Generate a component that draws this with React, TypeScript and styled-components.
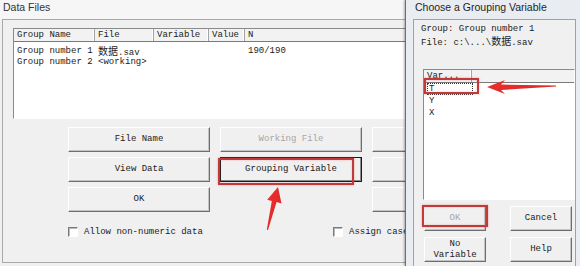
import React from "react";
import styled, { createGlobalStyle } from "styled-components";

const MONO = `"Liberation Mono", "Noto Sans CJK SC", monospace`;
const UI = `"Liberation Sans", "Noto Sans", sans-serif`;

const GlobalStyle = createGlobalStyle`
  html, body {
    margin: 0;
    padding: 0;
    background: #f0f0f0;
  }
`;

const groupColumns = [
  { label: "Group Name", width: 81 },
  { label: "File", width: 59 },
  { label: "Variable", width: 55 },
  { label: "Value", width: 36 },
  { label: "N", width: 200 },
];

const groupRows = [
  ["Group number 1", "数据.sav", "", "", "190/190"],
  ["Group number 2", "<working>", "", "", ""],
];

function App() {
  return (
    <Screen>
      <GlobalStyle />
      <DataWindow>
        <TitleBar>Data Files</TitleBar>
        <Frame>
          <ListBox>
            <HeaderRow>
              {groupColumns.map((c) => (
                <HeadCell key={c.label} $width={c.width}>
                  {c.label}
                </HeadCell>
              ))}
            </HeaderRow>
            <Rows>
              {groupRows.map((row, i) => (
                <Row key={i}>
                  {row.map((value, j) => (
                    <Cell key={j} $width={groupColumns[j].width}>
                      {value.startsWith("数据") ? (
                        <>
                          <Cjk>数据</Cjk>.sav
                        </>
                      ) : (
                        value
                      )}
                    </Cell>
                  ))}
                </Row>
              ))}
            </Rows>
          </ListBox>

          <ButtonGrid>
            <Button>File Name</Button>
            <Button disabled>Working File</Button>
            <Button />
            <Button>View Data</Button>
            <ButtonSlot>
              <Button $default>Grouping Variable</Button>
              <Highlight $left={-2} $top={1} $width={136} $height={27} />
            </ButtonSlot>
            <Button />
            <Button>OK</Button>
            <Spacer />
            <Button />
          </ButtonGrid>

          <CheckRow>
            <CheckOption $width={265}>
              <CheckBox />
              Allow non-numeric data
            </CheckOption>
            <CheckOption $width={200}>
              <CheckBox />
              Assign cases
            </CheckOption>
          </CheckRow>
        </Frame>
      </DataWindow>

      <Dialog>
        <DialogTitle>Choose a Grouping Variable</DialogTitle>
        <Client>
          <InfoLine>Group: Group number 1</InfoLine>
          <InfoLine>
            File: c:\...\<Cjk>数据</Cjk>.sav
          </InfoLine>
          <VarList>
            <HeaderRow>
              <HeadCell $width={48}>Var...</HeadCell>
            </HeaderRow>
            <VarItem $focused>T</VarItem>
            <VarItem>Y</VarItem>
            <VarItem>X</VarItem>
            <Highlight $left={0} $top={8} $width={55} $height={16} />
          </VarList>
          <DialogButtons>
            <ButtonSlot>
              <Button disabled>OK</Button>
              <Highlight $left={-2} $top={-1} $width={66} $height={22} />
            </ButtonSlot>
            <Button>Cancel</Button>
            <Button>
              No
              <br />
              Variable
            </Button>
            <Button>Help</Button>
          </DialogButtons>
        </Client>
      </Dialog>

      <Annotations viewBox="0 0 580 266">
        <defs>
          <linearGradient id="arrowRed" x1="0" y1="0" x2="1" y2="1">
            <stop offset="0" stopColor="#f0312a" />
            <stop offset="1" stopColor="#d4262a" />
          </linearGradient>
        </defs>
        <polygon
          points="278,187 281.5,203.5 276.6,202.1 268,230 266.8,229.8 271.8,200.9 267.2,199.8"
          fill="url(#arrowRed)"
        />
        <polygon
          points="487,87 505,80 501,84.5 556,85.6 556,86.6 501,90 505,94"
          fill="url(#arrowRed)"
        />
      </Annotations>
    </Screen>
  );
}

const Screen = styled.div`
  position: relative;
  display: flex;
  width: 580px;
  height: 266px;
  overflow: hidden;
  background: #f0f0f0;
  font-family: ${MONO};
  font-size: 9px;
  color: #1b1b1b;
`;

const DataWindow = styled.div`
  flex: none;
  width: 405px;
  display: flex;
  flex-direction: column;
  overflow: hidden;
  background: #f0f0f0;
`;

const TitleBar = styled.div`
  flex: none;
  height: 19px;
  padding: 1px 0 0 3px;
  box-sizing: border-box;
  font-family: ${UI};
  font-size: 10.5px;
  line-height: 13px;
  color: #333333;
  background: #f6f6f6;
`;

const Frame = styled.div`
  flex: 1;
  width: 560px;
  box-sizing: border-box;
  margin: 0 0 3px 2px;
  padding: 8px 0 0 10px;
  border: 1px solid #a9a9a9;
  border-right: none;
`;

const ListBox = styled.div`
  width: 520px;
  height: 91px;
  box-sizing: border-box;
  border: 1px solid;
  border-color: #8a8a8a #ffffff #ffffff #8a8a8a;
  background: #ffffff;
`;

const HeaderRow = styled.div`
  display: flex;
  height: 13px;
  box-sizing: border-box;
  border-bottom: 1px solid #7a7a7a;
  background: #f2f2f2;
`;

const HeadCell = styled.div<{ $width: number }>`
  flex: none;
  width: ${(p) => p.$width}px;
  box-sizing: border-box;
  padding-left: 3px;
  border-right: 1px solid #a3a3a3;
  box-shadow: inset -1px 0 0 #ffffff;
  line-height: 12px;
  white-space: nowrap;
  overflow: hidden;
`;

const Rows = styled.div`
  padding-top: 4px;
`;

const Row = styled.div`
  display: flex;
  height: 11px;
  line-height: 11px;
`;

const Cell = styled.div<{ $width: number }>`
  flex: none;
  width: ${(p) => p.$width}px;
  box-sizing: border-box;
  padding-left: 3px;
  white-space: nowrap;
`;

const Cjk = styled.span`
  font-family: "Noto Sans CJK SC", sans-serif;
  font-size: 10px;
  line-height: 10px;
`;

const ButtonGrid = styled.div`
  display: grid;
  grid-template-columns: repeat(3, 142px);
  grid-auto-rows: 25px;
  gap: 5px 10px;
  margin: 8px 0 0 55px;
`;

const ButtonSlot = styled.div`
  position: relative;
  display: flex;
`;

const Spacer = styled.div``;

const Button = styled.button<{ $default?: boolean }>`
  width: 100%;
  height: 100%;
  box-sizing: border-box;
  margin: 0;
  padding: 0;
  font-family: ${MONO};
  font-size: 9px;
  line-height: 11px;
  color: #1b1b1b;
  background: #f0f0f0;
  border: 1px solid;
  border-color: ${(p) =>
    p.$default ? "#1a1a1a" : "#ffffff #6e6e6e #6e6e6e #ffffff"};
  box-shadow: ${(p) =>
    p.$default ? "inset -1px -1px 0 #8a8a8a" : "inset -1px -1px 0 #c4c4c4"};

  &:disabled {
    color: #a6a6a6;
  }
`;

const Highlight = styled.div<{
  $left: number;
  $top: number;
  $width: number;
  $height: number;
}>`
  position: absolute;
  left: ${(p) => p.$left}px;
  top: ${(p) => p.$top}px;
  width: ${(p) => p.$width}px;
  height: ${(p) => p.$height}px;
  box-sizing: border-box;
  border: 2px solid #c03a3a;
  box-shadow: 0 0 2px rgba(230, 90, 90, 0.55),
    inset 0 0 2px rgba(230, 90, 90, 0.45);
  pointer-events: none;
`;

const CheckRow = styled.div`
  display: flex;
  margin: 14px 0 0 55px;
`;

const CheckOption = styled.label<{ $width: number }>`
  flex: none;
  width: ${(p) => p.$width}px;
  display: flex;
  align-items: center;
  gap: 6px;
  height: 11px;
  white-space: nowrap;
`;

const CheckBox = styled.span`
  flex: none;
  width: 10px;
  height: 10px;
  box-sizing: border-box;
  border: 1px solid;
  border-color: #7a7a7a #ffffff #ffffff #7a7a7a;
  box-shadow: inset 1px 1px 0 #b9b9b9;
  background: #ffffff;
`;

const Dialog = styled.div`
  flex: none;
  width: 175px;
  display: flex;
  flex-direction: column;
  box-sizing: border-box;
  background: #e9edf1;
  border-left: 1px solid #6f6f6f;
  box-shadow: -1px 0 2px rgba(0, 0, 0, 0.3);
  z-index: 1;
`;

const DialogTitle = styled.div`
  flex: none;
  height: 19px;
  padding: 1px 0 0 9px;
  box-sizing: border-box;
  font-family: ${UI};
  font-size: 10.5px;
  line-height: 13px;
  color: #1e1e1e;
  white-space: nowrap;
`;

const Client = styled.div`
  flex: 1;
  margin: 0 4px 0 7px;
  padding: 3px 0 0 7px;
  background: #f0f0f0;
  border: 1px solid #9aa3ad;
  border-bottom: none;
`;

const InfoLine = styled.div`
  height: 13px;
  line-height: 13px;
  white-space: nowrap;
`;

const VarList = styled.div`
  position: relative;
  height: 131px;
  box-sizing: border-box;
  margin: 20px 0 0 2px;
  border: 1px solid;
  border-color: #8a8a8a #ffffff #ffffff #8a8a8a;
  background: #ffffff;
`;

const VarItem = styled.div<{ $focused?: boolean }>`
  width: 46px;
  height: 12px;
  box-sizing: border-box;
  margin-left: 3px;
  padding-left: 1px;
  line-height: 10px;
  border: 1px ${(p) => (p.$focused ? "dotted #333333" : "solid transparent")};
`;

const DialogButtons = styled.div`
  display: grid;
  grid-template-columns: 62px 62px;
  grid-auto-rows: 25px;
  gap: 6px 24px;
  margin: 6px 0 0 3px;
`;

const Annotations = styled.svg`
  position: absolute;
  inset: 0;
  width: 580px;
  height: 266px;
  pointer-events: none;
  z-index: 2;
`;

export default App;
